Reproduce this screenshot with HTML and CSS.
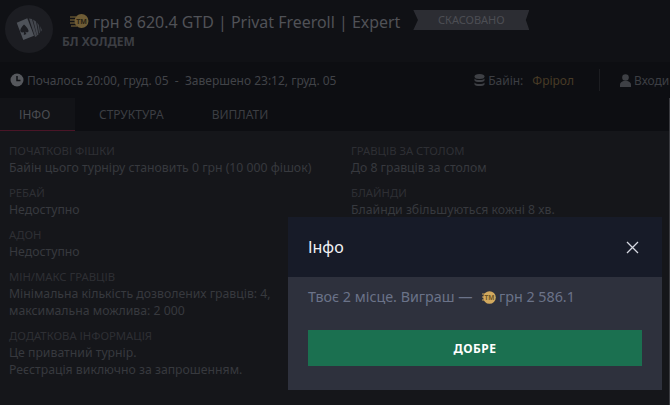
FILE: index.html
```html
<!DOCTYPE html>
<html lang="uk">
<head>
    <meta charset="UTF-8">
    <title>Privat Freeroll</title>
    <link rel="stylesheet" href="styles.css">
</head>
<body>
    <header class="top">
        <div class="logo">
            <svg width="48" height="48" viewBox="0 0 48 48">
                <path d="M24 13.500 L27 14 L32 31 L30 32 Z" fill="#43464d"/>
                <path d="M28 14.500 L31 16.500 L33.500 29.500 L32 30.500 Z" fill="#43464d"/>
                <path d="M32 17.500 L34 20 L35 27.500 L34 28.500 Z" fill="#3d4047"/>
                <path d="M35 21 L37 25 L35.800 27 Z" fill="#3d4047"/>
                <path d="M11.700 17.700 L22.300 13.300 L29 30.700 L18.300 35 Z" fill="#4e5259"/>
                <path d="M19 19.500 C20.800 21 22.800 23 23.500 25.500 C23.800 27.500 21.500 28 20.500 26.500 C20.500 27.500 21 28.500 21.500 29 L18.800 30 C19 29 19 28 18.700 27 C17.500 28 15.300 27.500 15.300 25.500 C15.500 23 17.500 21 19 19.500 Z" fill="#1c1d22"/>
            </svg>
        </div>
        <div class="head-text">
            <div class="title-row">
                <svg class="coin" width="20" height="16" viewBox="0 0 20 16">
                    <path d="M1 3h6M1 6h5M1 9h5M2 12h6" stroke="#5e4f2f" stroke-width="1.500"/>
                    <circle cx="12.500" cy="7" r="7" fill="#6f5d36"/>
                    <text x="12.500" y="9.500" class="coin-tm">TM</text>
                </svg>
                <h1 class="title">грн 8 620.4 GTD | Privat Freeroll | Expert</h1>
                <span class="ribbon">СКАСОВАНО</span>
            </div>
            <div class="game-type">БЛ ХОЛДЕМ</div>
        </div>
    </header>

    <div class="info-bar">
        <svg class="icon" width="14" height="14" viewBox="0 0 14 14">
            <circle cx="7" cy="7" r="6.500" fill="#56585d"/>
            <path d="M7 3v4.500h3.500" fill="none" stroke="#111216" stroke-width="1.500"/>
        </svg>
        <span class="dates">Почалось 20:00, груд. 05&nbsp; - &nbsp;Завершено 23:12, груд. 05</span>
        <div class="buyin">
            <svg class="icon" width="11" height="13" viewBox="0 0 11 13">
                <ellipse cx="5.500" cy="2.500" rx="5" ry="2.500" fill="#3e4045"/>
                <path d="M0.500 4.500c1 2 9 2 10 0v2c-1 2-9 2-10 0zM0.500 8.500c1 2 9 2 10 0v2c-1 2-9 2-10 0z" fill="#3e4045"/>
            </svg>
            <span>Байін:</span>
            <span class="free">Фрірол</span>
        </div>
        <div class="entries">
            <svg class="icon" width="11" height="13" viewBox="0 0 11 13">
                <circle cx="5.500" cy="3.500" r="3.300" fill="#3e4045"/>
                <path d="M0 13v-2.500c0-2 2-3 3.500-3.500h4c1.500 0.500 3.500 1.500 3.500 3.500v2.500z" fill="#3e4045"/>
            </svg>
            <span>Входи</span>
        </div>
    </div>

    <nav class="tabs">
        <a class="tab active">ІНФО</a>
        <a class="tab">СТРУКТУРА</a>
        <a class="tab">ВИПЛАТИ</a>
    </nav>

    <main class="content">
        <div class="col col-left">
            <div class="field">
                <div class="label">ПОЧАТКОВІ ФІШКИ</div>
                <div class="value">Байін цього турніру становить 0 грн (10 000 фішок)</div>
            </div>
            <div class="field">
                <div class="label">РЕБАЙ</div>
                <div class="value">Недоступно</div>
            </div>
            <div class="field">
                <div class="label">АДОН</div>
                <div class="value">Недоступно</div>
            </div>
            <div class="field">
                <div class="label">МІН/МАКС ГРАВЦІВ</div>
                <div class="value">Мінімальна кількість дозволених гравців: 4,<br>максимальна можлива: 2 000</div>
            </div>
            <div class="field">
                <div class="label">ДОДАТКОВА ІНФОРМАЦІЯ</div>
                <div class="value">Це приватний турнір.<br>Реєстрація виключно за запрошенням.</div>
            </div>
        </div>
        <div class="col">
            <div class="field">
                <div class="label">ГРАВЦІВ ЗА СТОЛОМ</div>
                <div class="value">До 8 гравців за столом</div>
            </div>
            <div class="field">
                <div class="label">БЛАЙНДИ</div>
                <div class="value">Блайнди збільшуються кожні 8 хв.</div>
            </div>
        </div>
    </main>

    <div class="modal">
        <div class="modal-head">
            <span class="modal-title">Інфо</span>
            <svg class="close" width="13" height="13" viewBox="0 0 13 13">
                <path d="M1 1l11 11M12 1L1 12" stroke="#d5d8e0" stroke-width="1.300"/>
            </svg>
        </div>
        <div class="modal-body">
            <p class="result">
                Твоє 2 місце. Виграш —
                <svg class="coin-small" width="14" height="13" viewBox="0 0 14 13">
                    <path d="M0 3h4M0 6h4M0 9h4" stroke="#c9a45c" stroke-width="1.200"/>
                    <circle cx="7.500" cy="6.500" r="6.300" fill="#d2a95e"/>
                    <text x="7.500" y="8.800" class="coin-tm small">TM</text>
                </svg>
                грн 2 586.1
            </p>
            <button class="ok-btn">ДОБРЕ</button>
        </div>
    </div>
</body>
</html>
```

FILE: styles.css
```css
* {
    box-sizing: border-box;
}
html, body {
    height: 100%;
}
body {
    margin: 0;
    overflow: hidden;
    position: relative;
    background-color: #15161a;
    font-family: "Noto Sans", sans-serif;
    color: #3c3e43;
}
.top {
    height: 62px;
    background-color: #101115;
    display: flex;
    align-items: flex-start;
    padding: 5px 0 0 5px;
}
.logo {
    width: 48px;
    height: 48px;
    border-radius: 50%;
    background-color: #1c1d22;
    flex-shrink: 0;
}
.head-text {
    margin-left: 9px;
}
.title-row {
    display: flex;
    align-items: center;
    margin-left: 7px;
    height: 24px;
    margin-top: 5px;
}
.coin {
    flex-shrink: 0;
    margin-right: 4px;
}
.coin-tm {
    font-family: "Noto Sans", sans-serif;
    font-size: 7px;
    font-weight: 700;
    fill: #2a2415;
    text-anchor: middle;
}
.coin-tm.small {
    font-size: 6.500px;
    fill: #6e5527;
}
.title {
    margin: 0;
    font-size: 15.950px;
    font-weight: 400;
    color: #505257;
    white-space: nowrap;
}
.ribbon {
    margin-left: 13px;
    margin-top: -4px;
    width: 116px;
    height: 20px;
    background-color: #2c2d33;
    color: #4c4e54;
    font-size: 11px;
    line-height: 20px;
    text-align: center;
    clip-path: polygon(0 0, 100% 0, 97% 50%, 100% 100%, 0 100%, 4% 50%);
}
.game-type {
    font-size: 12px;
    font-weight: 700;
    color: #3c3e43;
    line-height: 16px;
}
.info-bar {
    height: 36px;
    background-color: #0d0e12;
    display: flex;
    align-items: center;
    padding-left: 10px;
    font-size: 12px;
    white-space: nowrap;
}
.icon {
    flex-shrink: 0;
}
.dates {
    margin-left: 3px;
    color: #414348;
}
.buyin {
    margin-left: auto;
    display: flex;
    align-items: center;
    gap: 3px;
}
.free {
    margin-left: 6px;
    color: #483b26;
}
.entries {
    display: flex;
    align-items: center;
    gap: 3px;
    width: 71px;
    height: 22px;
    margin-left: 25px;
    padding-left: 20px;
    border-left: 1px solid #1c1d21;
    overflow: hidden;
}
.tabs {
    height: 33px;
    display: flex;
    background-color: #0d0e12;
    font-size: 12px;
    border-right: 1px solid #3a3b40;
}
.tab {
    line-height: 33px;
    padding: 0 30px 0 18px;
    color: #3c3e43;
}
.tab.active {
    background-color: #121317;
    border-bottom: 1px solid #4a1527;
    color: #4b4d52;
    width: 75px;
    padding: 0 0 0 19px;
    margin-right: 6px;
}
.content {
    display: flex;
    padding: 11px 0 0 9px;
    border-right: 1px solid #3a3b40;
    height: 274px;
}
.col {
    width: 342px;
    flex-shrink: 0;
}
.field {
    margin-bottom: 8px;
}
.label {
    font-size: 11.300px;
    line-height: 17px;
    color: #2e2f34;
}
.value {
    font-size: 12.250px;
    line-height: 17px;
    color: #37393e;
}
.modal {
    position: absolute;
    left: 288px;
    top: 217px;
    width: 374px;
    height: 173px;
    background-color: #2e313d;
}
.modal-head {
    height: 60px;
    background-color: #171b28;
    display: flex;
    align-items: center;
    justify-content: space-between;
    padding: 0 23px 0 20px;
}
.modal-title {
    font-size: 16px;
    color: #f0f1f4;
}
.modal-body {
    padding: 10px 20px 0;
}
.result {
    margin: 0;
    font-size: 14.300px;
    line-height: 20px;
    color: #6b7389;
    height: 43px;
}
.coin-small {
    vertical-align: -2px;
    margin-left: 6px;
    margin-right: -1px;
}
.ok-btn {
    display: block;
    width: 334px;
    height: 36px;
    border: 0;
    background-color: #1b7050;
    color: #fff;
    font-family: "Noto Sans", sans-serif;
    font-size: 12px;
    font-weight: 700;
    letter-spacing: 0.5px;
}
```
